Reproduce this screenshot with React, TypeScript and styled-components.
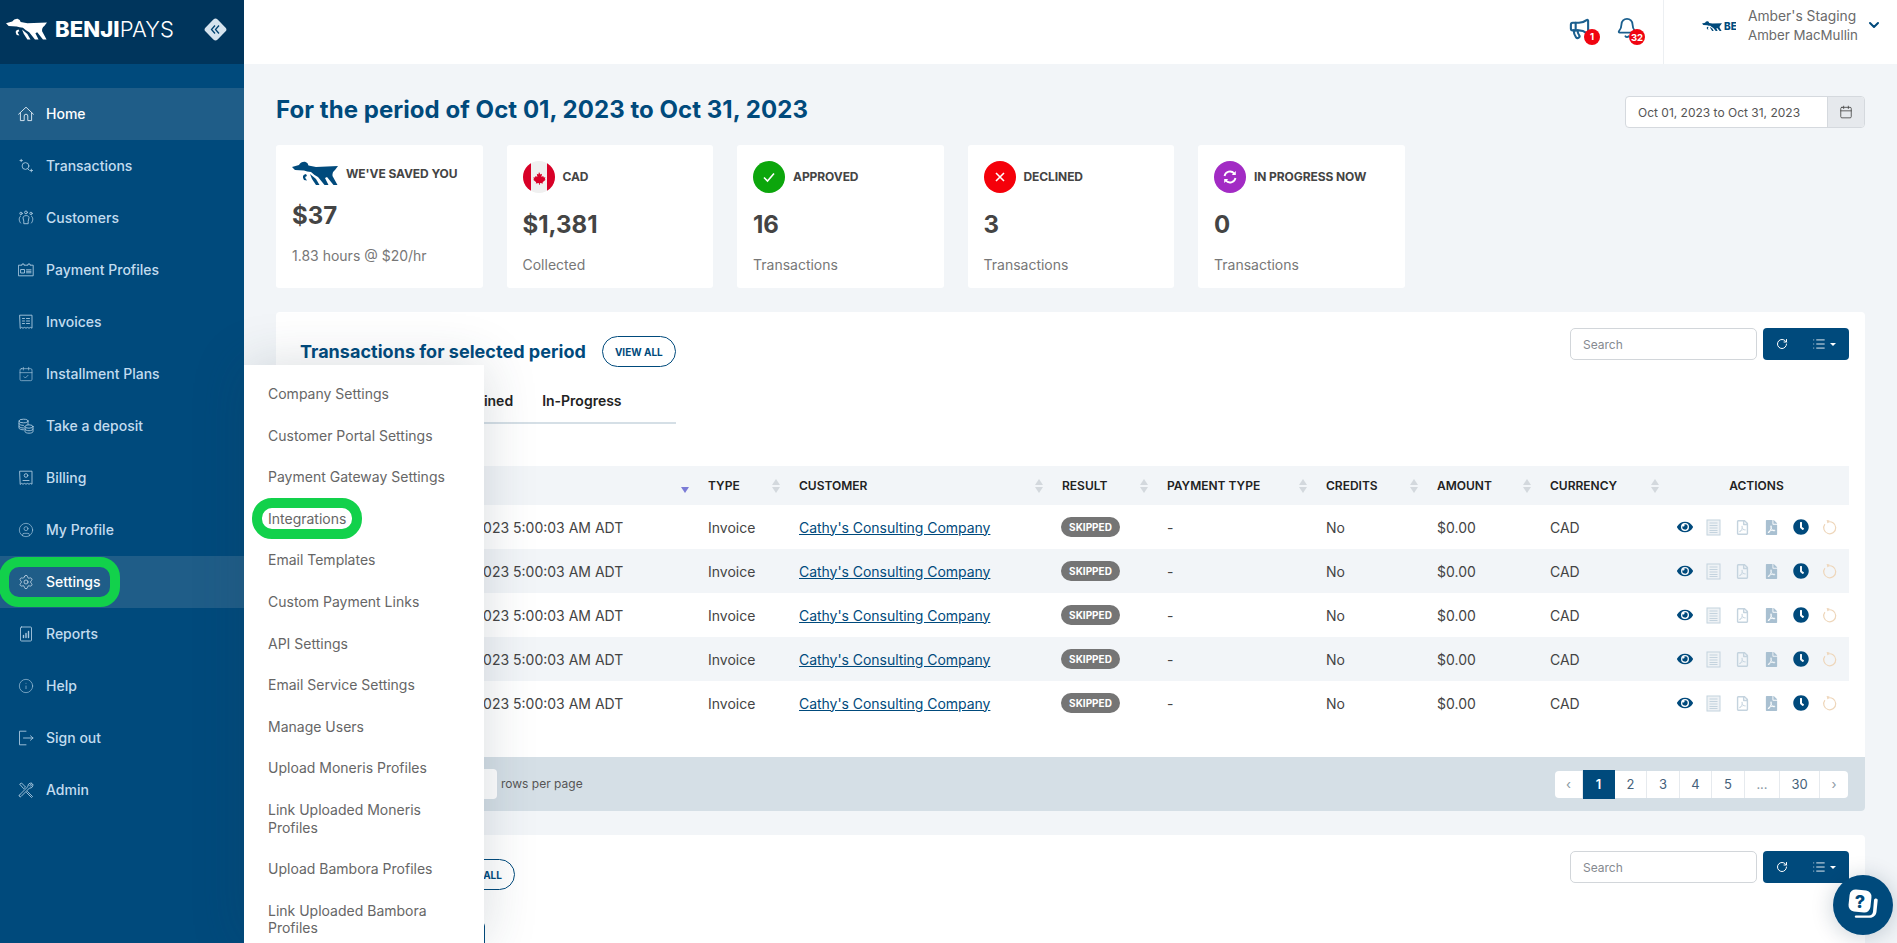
import React from "react";
import styled, { createGlobalStyle } from "styled-components";
import { Bell, ChevronDown, Megaphone, Calendar, RotateCw, List, CircleUser, Settings as Gear, Info, CalendarCheck } from "lucide-react";
import { FaEye, FaClock, FaFilePdf, FaRegFilePdf } from "react-icons/fa";

const NAVY = "#004a7c";

const Global = createGlobalStyle`
  html, body { margin: 0; padding: 0; height: 100%; overflow: hidden; }
  body { font-family: Inter, "Liberation Sans", sans-serif; color: #444; background: #f2f5f8; }
  * { box-sizing: border-box; }
`;

const Shell = styled.div`
  position: relative;
  display: flex;
  width: 100%;
  height: 943px;
  overflow: hidden;
`;
const Sidebar = styled.aside`
  flex: 0 0 244px;
  display: flex;
  flex-direction: column;
  background: ${NAVY};
`;
const LogoBar = styled.div`
  height: 64px;
  flex: none;
  display: flex;
  align-items: center;
  padding: 0 0 6px 6px;
  background: #00355c;
`;
const Wordmark = styled.span`
  margin-left: 8px;
  font-size: 22px;
  letter-spacing: 0.1px;
  color: #fff;
  font-weight: 800;
  width: 133px;
  & > em {
    font-style: normal;
    font-weight: 300;
  }
`;
const Collapse = styled.span`
  width: 17px;
  height: 17px;
  margin-left: 19px;
  border-radius: 3px;
  background: #d5e3ee;
  transform: rotate(45deg);
  display: flex;
  align-items: center;
  justify-content: center;
  & > svg { transform: rotate(-45deg); }
`;
const Nav = styled.nav`
  display: flex;
  flex-direction: column;
  padding-top: 24px;
`;
const NavItem = styled.a<{ $active?: boolean }>`
  height: 52px;
  display: flex;
  align-items: center;
  gap: 12px;
  padding: 0 0 1px 18px;
  font-size: 14px;
  font-weight: 500;
  color: ${(p) => (p.$active ? "#fff" : "#c3dcef")};
  background: ${(p) => (p.$active ? "#1f5d88" : "transparent")};
  & > svg { flex: none; color: ${(p) => (p.$active ? "#e4eff7" : "#a9c8df")}; }
`;
const Main = styled.main`
  flex: 1;
  min-width: 0;
  display: flex;
  flex-direction: column;
`;
const TopBar = styled.header`
  height: 64px;
  flex: none;
  background: #fff;
  display: flex;
  justify-content: flex-end;
  align-items: stretch;
`;
const Bells = styled.div`
  display: flex;
  align-items: center;
  gap: 25px;
  padding: 0 25px 8px 0;
  color: #1b5f8e;
`;
const BellWrap = styled.span`
  position: relative;
  display: flex;
`;
const Badge = styled.span<{ $left: number }>`
  position: absolute;
  left: ${(p) => p.$left}px;
  top: 12px;
  width: 16px;
  height: 16px;
  border-radius: 50%;
  background: #f00511;
  color: #fff;
  font-size: 9.5px;
  font-weight: 700;
  display: flex;
  align-items: center;
  justify-content: center;
`;
const Account = styled.div`
  width: 234px;
  border-left: 1px solid #eceff2;
  display: flex;
  align-items: center;
  padding: 0 0 12px 38px;
  color: #6a6a6a;
  position: relative;
`;
const MiniLogo = styled.div`
  width: 34px;
  margin-right: 12px;
  overflow: hidden;
  display: flex;
  align-items: center;
  gap: 2px;
  color: ${NAVY};
  font-size: 10px;
  font-weight: 800;
  flex: none;
  white-space: nowrap;
`;
const AccountText = styled.div`
  display: flex;
  flex-direction: column;
  gap: 2px;
  line-height: 17px;
  white-space: nowrap;
  font-size: 13.8px;
  & > span + span { font-size: 13.3px; }
`;
const AccountChevron = styled(ChevronDown)`
  margin-left: 8px;
  margin-bottom: 3px;
  color: ${NAVY};
  flex: none;
`;
const Content = styled.div`
  flex: 1;
  min-height: 0;
  padding: 32px 32px 0;
`;
const TitleRow = styled.div`
  display: flex;
  justify-content: space-between;
  align-items: center;
  height: 32px;
`;
const PageTitle = styled.h1`
  margin: 0 0 5px;
  font-size: 24px;
  font-weight: 700;
  letter-spacing: 0.05px;
  color: ${NAVY};
`;
const DateField = styled.div`
  width: 240px;
  height: 32px;
  display: flex;
  border: 1px solid #d5d9de;
  border-radius: 4px;
  background: #fff;
  font-size: 12px;
  color: #555;
  overflow: hidden;
`;
const DateText = styled.span`
  flex: 1;
  display: flex;
  align-items: center;
  padding-left: 12px;
  white-space: nowrap;
`;
const DateAddon = styled.span`
  width: 37px;
  background: #e6e9ed;
  border-left: 1px solid #d5d9de;
  display: flex;
  align-items: center;
  justify-content: center;
  color: #444;
`;
const Cards = styled.div`
  display: flex;
  gap: 24px;
  margin-top: 17px;
`;
const Card = styled.section`
  width: 206.5px;
  height: 143px;
  background: #fff;
  border-radius: 3px;
  padding: 16px;
  display: flex;
  flex-direction: column;
`;
const CardHead = styled.div<{ $logo?: boolean }>`
  display: flex;
  align-items: ${(p) => (p.$logo ? "flex-start" : "center")};
  gap: 8px;
  height: 32px;
  font-size: 12px;
  font-weight: 700;
  letter-spacing: -0.08px;
  color: #444;
  white-space: nowrap;
  line-height: ${(p) => (p.$logo ? "25px" : "23px")};
`;
const CardLabel = styled.span`
  display: block;
  margin-bottom: 2px;
`;
const CardValue = styled.div<{ $logo?: boolean }>`
  font-size: 24px;
  font-weight: 700;
  color: #444;
  line-height: 30px;
  margin-top: ${(p) => (p.$logo ? "8px" : "17px")};
`;
const CardSub = styled.div`
  font-size: 14px;
  color: #777;
  line-height: 17px;
  margin-top: 16px;
`;
const Circle = styled.span<{ $bg: string }>`
  width: 32px;
  height: 32px;
  border-radius: 50%;
  background: ${(p) => p.$bg};
  color: #fff;
  display: flex;
  align-items: center;
  justify-content: center;
  flex: none;
`;
const Panel = styled.section`
  background: #fff;
  border-radius: 4px;
  margin-top: 24px;
`;
const PanelBody = styled.div<{ $second?: boolean }>`
  padding: 16px 16px ${(p) => (p.$second ? "0" : "32px")};
`;
const PanelTop = styled.div`
  display: flex;
  justify-content: space-between;
  align-items: flex-start;
  height: 39px;
`;
const PanelTitleGroup = styled.div`
  display: flex;
  align-items: center;
  gap: 16px;
  margin: 8px 0 0 8px;
`;
const PanelTitle = styled.h2<{ $width?: number }>`
  margin: 0;
  font-size: 18px;
  font-weight: 700;
  letter-spacing: 0.03px;
  color: ${NAVY};
  white-space: nowrap;
  width: ${(p) => (p.$width ? `${p.$width}px` : "auto")};
`;
const Pill = styled.a`
  height: 31px;
  width: 74px;
  border: 1px solid ${NAVY};
  border-radius: 16px;
  display: flex;
  align-items: center;
  justify-content: center;
  font-size: 10px;
  font-weight: 700;
  color: ${NAVY};
`;
const Tools = styled.div`
  display: flex;
  gap: 6px;
`;
const SearchBox = styled.div`
  width: 187px;
  height: 32px;
  border: 1px solid #d2d6da;
  border-radius: 5px;
  padding-left: 12px;
  display: flex;
  align-items: center;
  font-size: 12px;
  color: #858a90;
`;
const ToolButton = styled.div`
  width: 86px;
  height: 32px;
  border-radius: 4px;
  background: ${NAVY};
  color: #fff;
  display: flex;
  align-items: center;
  padding-left: 13px;
`;
const Caret = styled.span`
  width: 0;
  height: 0;
  border-left: 3px solid transparent;
  border-right: 3px solid transparent;
  border-top: 3px solid #fff;
  margin-left: 4px;
`;
const ListGlyph = styled(List)`
  margin-left: 24px;
`;
const Tabs = styled.div`
  width: 376px;
  height: 43px;
  margin: 14px 0 42px 8px;
  padding: 0 0 2px 12px;
  border-bottom: 2px solid #d5dfe6;
  display: flex;
  align-items: center;
  gap: 29px;
  font-size: 14px;
  font-weight: 600;
  color: #222;
`;
const Table = styled.table`
  width: 1557px;
  border-collapse: collapse;
  table-layout: fixed;
`;
const Th = styled.th`
  height: 39px;
  padding: 0;
  background: #f2f5f8;
  font-size: 12px;
  font-weight: 600;
  color: #222;
  text-align: left;
`;
const ThInner = styled.div<{ $center?: boolean }>`
  display: flex;
  align-items: center;
  justify-content: ${(p) => (p.$center ? "center" : "space-between")};
  padding: ${(p) => (p.$center ? "0 0 0 2px" : "0 2px 0 16px")};
  white-space: nowrap;
`;
const Tr = styled.tr<{ $striped?: boolean }>`
  background: ${(p) => (p.$striped ? "#f2f5f8" : "#fff")};
`;
const Td = styled.td`
  height: 44px;
  padding: 0 0 0 16px;
  font-size: 14px;
  color: #444;
  white-space: nowrap;
`;
const DateTd = styled(Td)`
  padding-left: 133px;
`;
const CustomerLink = styled.a`
  color: ${NAVY};
  text-decoration: underline;
  letter-spacing: -0.04px;
`;
const Skipped = styled.span`
  display: inline-flex;
  align-items: center;
  justify-content: center;
  width: 59px;
  height: 20px;
  margin-left: -1px;
  border-radius: 10px;
  background: #757575;
  color: #fff;
  font-size: 10px;
  font-weight: 700;
  vertical-align: 1px;
`;
const Actions = styled.div`
  display: flex;
  align-items: center;
  width: 170px;
  margin-left: -2px;
  gap: 12px;
  height: 16px;
`;
const ActionSlot = styled.span<{ $color: string }>`
  width: 17px;
  height: 17px;
  display: flex;
  align-items: center;
  justify-content: center;
  color: ${(p) => p.$color};
  flex: none;
`;
const Footer = styled.div`
  height: 54px;
  background: #d5dfe6;
  border-radius: 0 0 4px 4px;
  display: flex;
  align-items: center;
  justify-content: space-between;
  padding: 0 17px 0 16px;
`;
const RowsGroup = styled.div`
  display: flex;
  align-items: center;
  font-size: 12px;
  color: #555;
  padding-bottom: 1px;
`;
const PageInfo = styled.span`
  width: 148px;
  white-space: nowrap;
`;
const RowsSelect = styled.span`
  width: 57px;
  height: 30px;
  margin-right: 4px;
  background: #fff;
  border-radius: 4px;
  display: flex;
  align-items: center;
  justify-content: center;
  color: #555;
`;
const Pager = styled.div`
  display: flex;
  align-items: center;
  height: 27px;
  border-radius: 4px;
  background: #fff;
`;
const PageItem = styled.span<{ $w: number; $active?: boolean; $muted?: boolean }>`
  width: ${(p) => p.$w}px;
  height: ${(p) => (p.$active ? "29px" : "27px")};
  display: flex;
  align-items: center;
  justify-content: center;
  font-size: 13px;
  color: ${(p) => (p.$active ? "#fff" : p.$muted ? "#8a97a3" : "#45617a")};
  font-weight: ${(p) => (p.$active ? 600 : 400)};
  background: ${(p) => (p.$active ? NAVY : "transparent")};
  border-right: 1px solid ${(p) => (p.$active ? NAVY : "#e6eaee")};
  &:last-child { border-right: none; }
`;
const OutlineButton = styled.div`
  width: 185px;
  height: 40px;
  margin: 32px 0 0 8px;
  border: 1.5px solid ${NAVY};
  border-radius: 4px;
  padding-left: 14px;
  display: flex;
  align-items: center;
  font-size: 13px;
  color: ${NAVY};
`;
const Menu = styled.div`
  position: absolute;
  left: 244px;
  top: 365px;
  width: 240px;
  height: 578px;
  padding: 8px 24px 0;
  background: #fff;
  box-shadow: 0 0 50px rgba(40, 60, 80, 0.18);
  display: flex;
  flex-direction: column;
  overflow: hidden;
`;
const MenuItem = styled.a`
  padding: 12px 0;
  font-size: 14px;
  line-height: 17.6px;
  color: #666;
`;
const Ring = styled.span<{ $w: number; $h: number; $x: number; $y: number }>`
  position: absolute;
  left: ${(p) => p.$x}px;
  top: ${(p) => p.$y}px;
  width: ${(p) => p.$w}px;
  height: ${(p) => p.$h}px;
  border: 10px solid #12d14b;
  border-radius: 20px;
  pointer-events: none;
`;
const HelpFab = styled.div`
  position: absolute;
  right: 4px;
  bottom: 8px;
  width: 60px;
  height: 60px;
  border-radius: 50%;
  background: ${NAVY};
  box-shadow: 0 2px 22px rgba(0, 40, 70, 0.22);
  display: flex;
  align-items: center;
  justify-content: center;
`;

const Dog = ({ w, color }: { w: number; color: string }) => (
  <svg width={w} height={(w * 24) / 46} viewBox="0 0 46 24" fill={color} style={{ flex: "none" }}>
    <path d="M0 6 L7 4 Q9 .5 13 .8 Q16 1.5 16.5 4.5 L24 6 L46 5 L43 9 Q40 11 40.5 15 L45.5 24 L41.5 24 L35 16 L33 17 L36.5 24 L32.5 24 L26 16 Q22 14 19 11 Q15 10.5 12 9.5 L3 9 Z" />
    <path d="M18 13 L24 18 L27.5 24 L24 24 L20 18 Z" />
    <path d="M14 13 Q9 14 12 19 L15 19.5 L14 18 Q12 16 15 15 Z" />
  </svg>
);

const Ico = ({ children }: { children: React.ReactNode }) => (
  <svg width="16" height="16" viewBox="0 0 16 16" fill="none" stroke="currentColor" strokeWidth="0.9" strokeLinecap="round" strokeLinejoin="round">
    {children}
  </svg>
);

const navItems: { label: string; active?: boolean; icon: React.ReactNode }[] = [
  { label: "Home", active: true, icon: <Ico><path d="M.6 8.2 8 1.2l7.4 7" /><path d="M2.4 7v7.6h3.8V10a1.8 1.8 0 0 1 3.6 0v4.6h3.8V7" /></Ico> },
  { label: "Transactions", icon: <Ico><circle cx="7.5" cy="8" r="3.4" /><path d="M2 2.5h2.4M3.2 1.3v2.4M12 12.5h2.6M13.3 11.2v2.6M10 11l1 1" /></Ico> },
  { label: "Customers", icon: <Ico><circle cx="8" cy="2.4" r="1.4" /><circle cx="3" cy="3.4" r="1.2" /><circle cx="13" cy="3.4" r="1.2" /><path d="M5 7.5c0-2.6 6-2.6 6 0l-.8 4v2.2H5.8v-2.2zM2.6 6C.6 7.5.8 11 2.6 13M13.4 6c2 1.5 1.8 5 0 7" /></Ico> },
  { label: "Payment Profiles", icon: <Ico><path d="M.8 3.2h3.2v-1.2h2v1.2h4v-1.2h2v1.2h3.2v10.6H.8z" /><path d="M3 7.5h3.5v3.5H3zM8.5 7.8h4.5M8.5 9.3h4.5M8.5 10.8h4.5" /></Ico> },
  { label: "Invoices", icon: <Ico><path d="M2 1.2h12v13l-1.5-.8-1.5.8-1.5-.8-1.5.8-1.5-.8-1.5.8-1.5-.8-1 .8z" /><path d="M4.5 4.5h2M4.5 7h2M4.5 9.5h2M8.5 4.5h3M8.5 7h3M8.5 9.5h3" /></Ico> },
  { label: "Installment Plans", icon: <CalendarCheck size={16} strokeWidth={1} /> },
  { label: "Take a deposit", icon: <Ico><ellipse cx="5.5" cy="3" rx="4.5" ry="1.8" /><path d="M1 3v7c0 1 2 1.8 4.5 1.8M1 5.6c0 1 2 1.8 4.5 1.8M1 8.2c0 1 2 1.8 4.5 1.8M10 3v3.5" /><ellipse cx="11" cy="8.5" rx="4" ry="1.7" /><path d="M7 8.5v5c0 1 1.8 1.7 4 1.7s4-.7 4-1.7v-5M7 11c0 1 1.8 1.7 4 1.7s4-.7 4-1.7" /></Ico> },
  { label: "Billing", icon: <Ico><path d="M2 1.2h12v13l-1.5-.8-1.5.8-1.5-.8-1.5.8-1.5-.8-1.5.8-1.5-.8-1 .8z" /><circle cx="8" cy="5.5" r="1.8" /><path d="M5 10.5h6" /></Ico> },
  { label: "My Profile", icon: <CircleUser size={16} strokeWidth={1} /> },
  { label: "Settings", active: true, icon: <Gear size={16} strokeWidth={1} /> },
  { label: "Reports", icon: <Ico><rect x="2.5" y="1" width="11" height="14" rx="1" /><path d="M5.5 11.5v-2M8 11.5v-4M10.5 11.5v-6" strokeWidth="1.4" /></Ico> },
  { label: "Help", icon: <Info size={16} strokeWidth={1} /> },
  { label: "Sign out", icon: <Ico><path d="M8 1.2H1.5v13.6H8" /><path d="M5.5 8h9.5M12.5 5.8 15 8l-2.5 2.2" /></Ico> },
  { label: "Admin", icon: <Ico><path d="M1.5 13 10 4.5C9.5 2.4 11.5.6 14 1.2L11.8 3.4l.8.8L14.8 2c.6 2.5-1.2 4.5-3.3 4L3 14.5a1 1 0 0 1-1.5-1.5z" /><path d="M2 2l1.5-1 4 4-1.5 1.5zM9.5 9.5l5 5-1 1-5-5" /></Ico> },
];

const menuItems = [
  "Company Settings", "Customer Portal Settings", "Payment Gateway Settings", "Integrations", "Email Templates",
  "Custom Payment Links", "API Settings", "Email Service Settings", "Manage Users", "Upload Moneris Profiles",
  "Link Uploaded Moneris Profiles", "Upload Bambora Profiles", "Link Uploaded Bambora Profiles",
];

const Sort = ({ down }: { down?: boolean }) => (
  <svg width="10" height="16" viewBox="0 0 10 16">
    {!down && <path d="M5 1 9 7H1z" fill="#d3d8dd" />}
    <path d="M5 15 9 9H1z" fill={down ? "#7b7bd6" : "#d3d8dd"} />
  </svg>
);

const columns: [string, number, boolean][] = [
  ["DATE", 400, true], ["TYPE", 91, true], ["CUSTOMER", 263, true], ["RESULT", 105, true], ["PAYMENT TYPE", 159, true],
  ["CREDITS", 111, true], ["AMOUNT", 113, true], ["CURRENCY", 128, true], ["ACTIONS", 187, false],
];

const DocIcon = () => (
  <svg width="15" height="17" viewBox="0 0 15 17" fill="none" stroke="#c4d3de" strokeWidth="1">
    <rect x="1" y="1" width="13" height="15" fill="#eef2f5" />
    <path d="M3.5 4h8M3.5 6.5h8M3.5 9h8M3.5 11.5h8M3.5 13.5h8" />
  </svg>
);

const UndoRing = () => (
  <svg width="16" height="17" viewBox="0 0 16 17" fill="none" stroke="#eed6ba" strokeWidth="1.2">
    <path d="M5.5 3.2a6 6 0 1 1-2.6 2" />
    <path d="M4.6 1 7.6 1.4 5.6 4.4z" fill="#eed6ba" stroke="none" />
  </svg>
);

const ToolRow = () => (
  <Tools>
    <SearchBox>Search</SearchBox>
    <ToolButton>
      <RotateCw size={12} strokeWidth={2} />
      <ListGlyph size={14} strokeWidth={1.5} />
      <Caret />
    </ToolButton>
  </Tools>
);

const Maple = () => (
  <svg width="32" height="32" viewBox="0 0 32 32" style={{ flex: "none" }}>
    <defs><clipPath id="flagc"><circle cx="16" cy="16" r="16" /></clipPath></defs>
    <g clipPath="url(#flagc)">
      <rect width="32" height="32" fill="#f0f0f0" />
      <rect width="8" height="32" fill="#d80027" />
      <rect x="24" width="8" height="32" fill="#d80027" />
      <path d="M16 11l1.4 2.4 1.6-.6-.6 3.2 1.8-1 .6 1.4 1.6-.2-.6 2 .8.6-3 2.4.4 1.2-3-.4-.4 2h-.4l-.4-2-3 .4.4-1.2-3-2.4.8-.6-.6-2 1.6.2.6-1.4 1.8 1-.6-3.2 1.6.6z" fill="#d80027" />
    </g>
  </svg>
);

export default function App() {
  return (
    <Shell>
      <Global />
      <Sidebar>
        <LogoBar>
          <Dog w={41} color="#fff" />
          <Wordmark>BENJI<em>PAYS</em></Wordmark>
          <Collapse>
            <svg width="13" height="13" viewBox="0 0 13 13" fill="none" stroke="#00426f" strokeWidth="1.3">
              <path d="M6 2.5 2.5 6.5 6 10.5M10 2.5 6.5 6.5 10 10.5" />
            </svg>
          </Collapse>
        </LogoBar>
        <Nav>
          {navItems.map((n) => (
            <NavItem key={n.label} $active={n.active}>{n.icon}{n.label}</NavItem>
          ))}
        </Nav>
      </Sidebar>
      <Main>
        <TopBar>
          <Bells>
            <BellWrap>
              <Megaphone size={23} strokeWidth={2.2} />
              <Badge $left={16}>1</Badge>
            </BellWrap>
            <BellWrap>
              <Bell size={22} strokeWidth={2} />
              <Badge $left={13}>32</Badge>
            </BellWrap>
          </Bells>
          <Account>
            <MiniLogo><Dog w={20} color={NAVY} />BENJI</MiniLogo>
            <AccountText>
              <span>Amber's Staging</span>
              <span>Amber MacMullin</span>
            </AccountText>
            <AccountChevron size={16} strokeWidth={3} />
          </Account>
        </TopBar>
        <Content>
          <TitleRow>
            <PageTitle>For the period of Oct 01, 2023 to Oct 31, 2023</PageTitle>
            <DateField>
              <DateText>Oct 01, 2023 to Oct 31, 2023</DateText>
              <DateAddon><Calendar size={14} strokeWidth={1.4} /></DateAddon>
            </DateField>
          </TitleRow>
          <Cards>
            <Card>
              <CardHead $logo><Dog w={46} color={NAVY} /><CardLabel>WE'VE SAVED YOU</CardLabel></CardHead>
              <CardValue $logo>$37</CardValue>
              <CardSub>1.83 hours @ $20/hr</CardSub>
            </Card>
            <Card>
              <CardHead><Maple /><CardLabel>CAD</CardLabel></CardHead>
              <CardValue>$1,381</CardValue>
              <CardSub>Collected</CardSub>
            </Card>
            <Card>
              <CardHead>
                <Circle $bg="#0ca60c">
                  <svg width="14" height="14" viewBox="0 0 14 14" fill="none" stroke="#fff" strokeWidth="1.6"><path d="M2 7.5 5.5 11 12 3.5" /></svg>
                </Circle><CardLabel>APPROVED</CardLabel>
              </CardHead>
              <CardValue>16</CardValue>
              <CardSub>Transactions</CardSub>
            </Card>
            <Card>
              <CardHead>
                <Circle $bg="#f5000a">
                  <svg width="12" height="12" viewBox="0 0 12 12" fill="none" stroke="#fff" strokeWidth="1.6"><path d="M2 2l8 8M10 2l-8 8" /></svg>
                </Circle><CardLabel>DECLINED</CardLabel>
              </CardHead>
              <CardValue>3</CardValue>
              <CardSub>Transactions</CardSub>
            </Card>
            <Card>
              <CardHead>
                <Circle $bg="#a22bc4">
                  <svg width="18" height="18" viewBox="0 0 18 18" fill="none" stroke="#fff" strokeWidth="1.8">
                    <path d="M3.5 8a5.6 5.6 0 0 1 9.8-2.4M14.5 10a5.6 5.6 0 0 1-9.8 2.4" />
                    <path d="M14.8 3v4h-4zM3.2 15v-4h4z" fill="#fff" stroke="none" />
                  </svg>
                </Circle><CardLabel>IN PROGRESS NOW</CardLabel>
              </CardHead>
              <CardValue>0</CardValue>
              <CardSub>Transactions</CardSub>
            </Card>
          </Cards>

          <Panel>
            <PanelBody>
              <PanelTop>
                <PanelTitleGroup>
                  <PanelTitle>Transactions for selected period</PanelTitle>
                  <Pill>VIEW ALL</Pill>
                </PanelTitleGroup>
                <ToolRow />
              </PanelTop>
              <Tabs>
                <span>All</span><span>Approved</span><span>Declined</span><span>In-Progress</span>
              </Tabs>
              <Table>
                <colgroup>
                  {columns.map(([c, w]) => <col key={c} width={w} />)}
                </colgroup>
                <thead>
                  <tr>
                    {columns.map(([c, , sortable], i) => (
                      <Th key={c}>
                        <ThInner $center={!sortable}>{c}{sortable && <Sort down={i === 0} />}</ThInner>
                      </Th>
                    ))}
                  </tr>
                </thead>
                <tbody>
                  {[0, 1, 2, 3, 4].map((i) => (
                    <Tr key={i} $striped={i % 2 === 1}>
                      <DateTd>Oct 31, 2023 5:00:03 AM ADT</DateTd>
                      <Td>Invoice</Td>
                      <Td><CustomerLink>Cathy's Consulting Company</CustomerLink></Td>
                      <Td><Skipped>SKIPPED</Skipped></Td>
                      <Td>-</Td>
                      <Td>No</Td>
                      <Td>$0.00</Td>
                      <Td>CAD</Td>
                      <Td>
                        <Actions>
                          <ActionSlot $color={NAVY}><FaEye size={16} /></ActionSlot>
                          <ActionSlot $color="#c4d3de"><DocIcon /></ActionSlot>
                          <ActionSlot $color="#c4d3de"><FaRegFilePdf size={15} /></ActionSlot>
                          <ActionSlot $color="#a9c0d1"><FaFilePdf size={15} /></ActionSlot>
                          <ActionSlot $color={NAVY}><FaClock size={16} /></ActionSlot>
                          <ActionSlot $color="#eed6ba"><UndoRing /></ActionSlot>
                        </Actions>
                      </Td>
                    </Tr>
                  ))}
                </tbody>
              </Table>
            </PanelBody>
            <Footer>
              <RowsGroup>
                <PageInfo>Showing 1 to 5 of 150</PageInfo>
                <RowsSelect>5</RowsSelect>
                rows per page
              </RowsGroup>
              <Pager>
                <PageItem $w={28} $muted>‹</PageItem>
                <PageItem $w={32} $active>1</PageItem>
                <PageItem $w={32}>2</PageItem>
                <PageItem $w={33}>3</PageItem>
                <PageItem $w={32}>4</PageItem>
                <PageItem $w={33}>5</PageItem>
                <PageItem $w={35} $muted>...</PageItem>
                <PageItem $w={40}>30</PageItem>
                <PageItem $w={28} $muted>›</PageItem>
              </Pager>
            </Footer>
          </Panel>

          <Panel>
            <PanelBody $second>
              <PanelTop>
                <PanelTitleGroup>
                  <PanelTitle $width={125}>Subscriptions</PanelTitle>
                  <Pill>VIEW ALL</Pill>
                </PanelTitleGroup>
                <ToolRow />
              </PanelTop>
              <OutlineButton>New link</OutlineButton>
            </PanelBody>
          </Panel>
        </Content>
      </Main>

      <Menu>
        {menuItems.map((m) => <MenuItem key={m}>{m}</MenuItem>)}
      </Menu>
      <Ring $x={-1} $y={557} $w={121} $h={50} />
      <Ring $x={252} $y={498} $w={110} $h={41} />
      <HelpFab>
        <svg width="36" height="36" viewBox="0 0 36 36">
          <path d="M31 11.5c1 0 1.8.8 1.7 1.8l-1.2 11.5c-.4 3.6-3 6-6.6 6H11c-1.2 0-1.7-1.2-.8-2 .3-.2.7-.4 1.2-.4h12.6c2.2 0 3.8-1.5 4-3.7l1-11.6c.1-1 .9-1.6 2-1.6z" fill="#fff" />
          <rect x="4" y="3" width="22" height="22" rx="6" fill="#fff" transform="rotate(6 15 14)" />
          <text x="15" y="20.5" textAnchor="middle" fontSize="18" fontWeight="800" fontFamily="Inter, sans-serif" fill={NAVY}>?</text>
        </svg>
      </HelpFab>
    </Shell>
  );
}
